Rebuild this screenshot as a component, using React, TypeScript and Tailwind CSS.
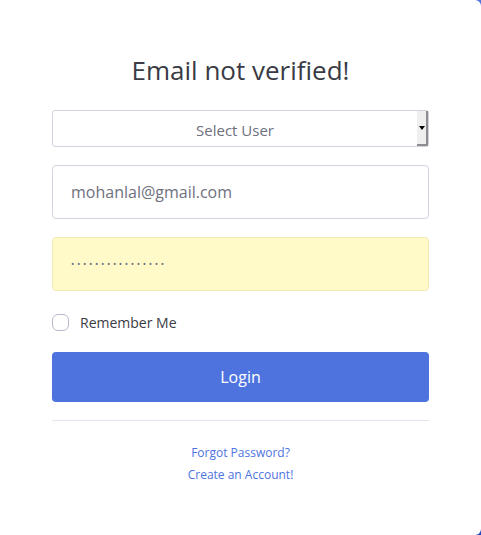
export default function App() {
  return (
    <div className="h-[535px] w-[481px] bg-gradient-to-b from-[#4e73df] to-[#224abe]" style={{ fontFamily: '"Open Sans", "Noto Sans", sans-serif' }}>
      <div className="flex h-full flex-col rounded-r-[6px] bg-white px-[52px] pt-[52px]">
        <h1 className="text-center text-[26px] leading-[37px] text-[#3a3b45]">Email not verified!</h1>

        <form className="mt-[21px] flex flex-col" onSubmit={(e) => e.preventDefault()}>
          {/* select with the old native arrow box */}
          <div className="flex h-[37px] rounded-[3px] border border-[#d1d3e2] bg-white">
            <span className="flex-1 pt-[2px] text-center text-[15px] leading-[35px] text-[#6e707e]">Select User</span>
            <span className="flex w-[11px] items-center justify-center border-b-2 border-r-2 border-[#8d8d8d] bg-[#efefef]">
              <span className="h-0 w-0 border-x-[3px] border-t-[4px] border-x-transparent border-t-black" />
            </span>
          </div>

          <div className="mt-[18px] flex h-[54px] items-center rounded-[4px] border border-[#d1d3e2] px-[18px] text-[16px] text-[#6e707e]">
            mohanlal@gmail.com
          </div>

          <div className="mt-[18px] flex h-[54px] items-center rounded-[4px] border border-[#f3e7b4] bg-[#fffac8] px-[18px] text-[9px] tracking-[2.6px] text-[#6e707e]">
            ••••••••••••••••
          </div>

          <label className="mt-[21px] flex items-center gap-[11px]">
            <span className="h-[17px] w-[17px] rounded-[6px] border border-[#b7b9cc] bg-white" />
            <span className="text-[14px] text-[#3a3b45]">Remember Me</span>
          </label>

          <button type="submit" className="mt-[19px] h-[50px] rounded-[4px] bg-[#4e73df] text-[16px] text-white">
            Login
          </button>
        </form>

        <hr className="mt-[18px] border-[#e3e6f0]" />

        <div className="mt-[23px] flex flex-col items-center gap-[5px] text-[12px] leading-[17px] text-[#4e73df]">
          <a href="#">Forgot Password?</a>
          <a href="#">Create an Account!</a>
        </div>
      </div>
    </div>
  );
}
